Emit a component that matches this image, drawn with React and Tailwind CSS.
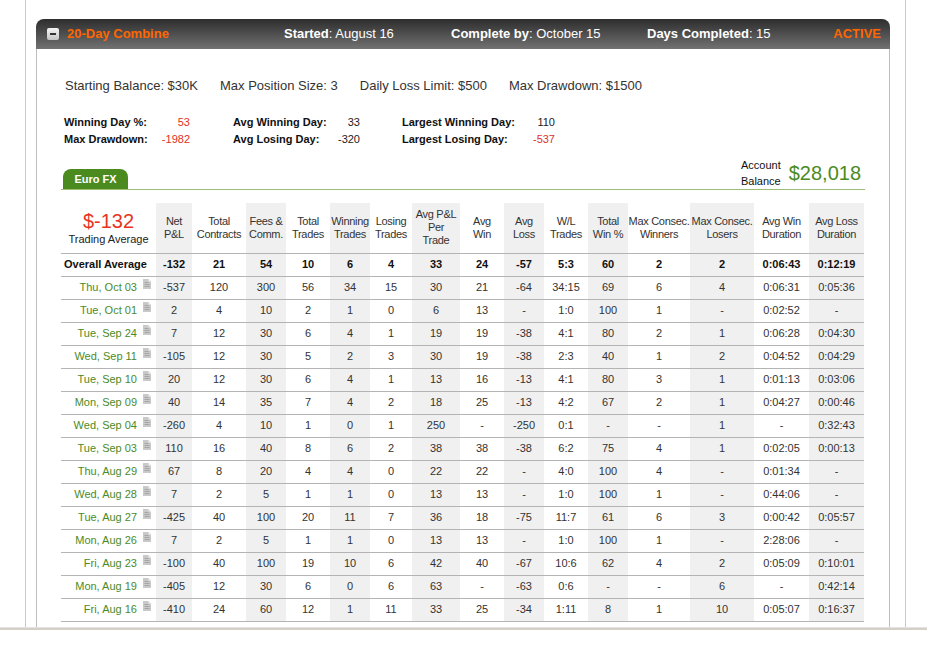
import React from "react";

const columns = [
  ["Net", "P&L"],
  ["Total", "Contracts"],
  ["Fees &", "Comm."],
  ["Total", "Trades"],
  ["Winning", "Trades"],
  ["Losing", "Trades"],
  ["Avg P&L", "Per", "Trade"],
  ["Avg", "Win"],
  ["Avg", "Loss"],
  ["W/L", "Trades"],
  ["Total", "Win %"],
  ["Max Consec.", "Winners"],
  ["Max Consec.", "Losers"],
  ["Avg Win", "Duration"],
  ["Avg Loss", "Duration"],
];

const widths = [95, 36, 54, 40, 44, 40, 42, 48, 44, 40, 44, 40, 62, 64, 55, 55];

const overall = ["-132", "21", "54", "10", "6", "4", "33", "24", "-57", "5:3", "60", "2", "2", "0:06:43", "0:12:19"];

const days = [
  ["Thu, Oct 03", "-537", "120", "300", "56", "34", "15", "30", "21", "-64", "34:15", "69", "6", "4", "0:06:31", "0:05:36"],
  ["Tue, Oct 01", "2", "4", "10", "2", "1", "0", "6", "13", "-", "1:0", "100", "1", "-", "0:02:52", "-"],
  ["Tue, Sep 24", "7", "12", "30", "6", "4", "1", "19", "19", "-38", "4:1", "80", "2", "1", "0:06:28", "0:04:30"],
  ["Wed, Sep 11", "-105", "12", "30", "5", "2", "3", "30", "19", "-38", "2:3", "40", "1", "2", "0:04:52", "0:04:29"],
  ["Tue, Sep 10", "20", "12", "30", "6", "4", "1", "13", "16", "-13", "4:1", "80", "3", "1", "0:01:13", "0:03:06"],
  ["Mon, Sep 09", "40", "14", "35", "7", "4", "2", "18", "25", "-13", "4:2", "67", "2", "1", "0:04:27", "0:00:46"],
  ["Wed, Sep 04", "-260", "4", "10", "1", "0", "1", "250", "-", "-250", "0:1", "-", "-", "1", "-", "0:32:43"],
  ["Tue, Sep 03", "110", "16", "40", "8", "6", "2", "38", "38", "-38", "6:2", "75", "4", "1", "0:02:05", "0:00:13"],
  ["Thu, Aug 29", "67", "8", "20", "4", "4", "0", "22", "22", "-", "4:0", "100", "4", "-", "0:01:34", "-"],
  ["Wed, Aug 28", "7", "2", "5", "1", "1", "0", "13", "13", "-", "1:0", "100", "1", "-", "0:44:06", "-"],
  ["Tue, Aug 27", "-425", "40", "100", "20", "11", "7", "36", "18", "-75", "11:7", "61", "6", "3", "0:00:42", "0:05:57"],
  ["Mon, Aug 26", "7", "2", "5", "1", "1", "0", "13", "13", "-", "1:0", "100", "1", "-", "2:28:06", "-"],
  ["Fri, Aug 23", "-100", "40", "100", "19", "10", "6", "42", "40", "-67", "10:6", "62", "4", "2", "0:05:09", "0:10:01"],
  ["Mon, Aug 19", "-405", "12", "30", "6", "0", "6", "63", "-", "-63", "0:6", "-", "-", "6", "-", "0:42:14"],
  ["Fri, Aug 16", "-410", "24", "60", "12", "1", "11", "33", "25", "-34", "1:11", "8", "1", "10", "0:05:07", "0:16:37"],
];

function NoteIcon() {
  return (
    <svg width="8" height="10" viewBox="0 0 8 10" className="inline-block align-[2px] ml-[6px]">
      <path d="M0 0h5.5L8 2.5V10H0z" fill="#c9c9c9" />
      <path d="M5.5 0v2.5H8z" fill="#efefef" />
      <path d="M1.5 3.5h4M1.5 5.5h5M1.5 7.5h5" stroke="#a5a5a5" strokeWidth="1" />
    </svg>
  );
}

function Stat({ label, value, red, width }) {
  return (
    <div className="flex justify-between" style={{ width }}>
      <span className="font-bold text-[#111]">{label}</span>
      <span className={red ? "text-[#e0301e]" : "text-[#222]"}>{value}</span>
    </div>
  );
}

export default function App() {
  const shade = (i) => (i % 2 === 1 ? "bg-[#f0f0f0]" : "");

  return (
    <div className="w-[927px] h-[656px] bg-white overflow-hidden font-['Liberation_Sans',Arial,sans-serif]">
      <div className="h-[628px] border-b border-[#e2e2e2]">
        <div className="ml-[25px] w-[881px] h-full border-x border-[#cacaca] pt-[19px] pl-[10px]">
          <div className="w-[854px] h-full flex flex-col">
            {/* header bar */}
            <div className="h-[30px] shrink-0 rounded-t-[8px] bg-gradient-to-b from-[#2e2e2e] to-[#727272] flex items-center text-[13px] text-white">
              <div className="w-[248px] flex items-center pl-[11px]">
                <div className="w-[12px] h-[12px] rounded-[2px] bg-gradient-to-b from-[#f6f6f6] to-[#c4c4c4] flex items-center justify-center">
                  <span className="block w-[6px] h-[2px] bg-[#333]" />
                </div>
                <span className="ml-[8px] font-bold text-[#ff6600]">20-Day Combine</span>
              </div>
              <div className="w-[167px]">
                <span className="font-bold">Started</span>: August 16
              </div>
              <div className="w-[196px]">
                <span className="font-bold">Complete by</span>: October 15
              </div>
              <div className="flex-1">
                <span className="font-bold">Days Completed</span>: 15
              </div>
              <div className="pr-[9px] font-bold text-[#ff6600]">ACTIVE</div>
            </div>

            {/* body */}
            <div className="flex-1 border-x border-[#bdbdbd] px-[24px] pt-[29px]">
              <div className="pl-[4px] flex gap-[22px] text-[13px] leading-[16px] text-[#333]">
                <span>Starting Balance: $30K</span>
                <span>Max Position Size: 3</span>
                <span>Daily Loss Limit: $500</span>
                <span>Max Drawdown: $1500</span>
              </div>

              <div className="mt-[20px] pl-[3px] flex text-[11px] leading-[17px]">
                <div>
                  <Stat label="Winning Day %:" value="53" red width={126} />
                  <Stat label="Max Drawdown:" value="-1982" red width={126} />
                </div>
                <div className="ml-[43px]">
                  <Stat label="Avg Winning Day:" value="33" width={127} />
                  <Stat label="Avg Losing Day:" value="-320" width={127} />
                </div>
                <div className="ml-[42px]">
                  <Stat label="Largest Winning Day:" value="110" width={153} />
                  <Stat label="Largest Losing Day:" value="-537" red width={153} />
                </div>
              </div>

              <div className="mt-[9px] flex items-end justify-between border-b border-[#9cbf73]">
                <div className="ml-[2px] w-[65px] h-[20px] rounded-t-[8px] bg-[#4a8a1e] text-white text-[11px] font-bold flex items-center justify-center">
                  Euro FX
                </div>
                <div className="flex items-center pr-[4px]">
                  <div className="text-[11px] leading-[16px] text-[#111]">
                    Account
                    <br />
                    Balance
                  </div>
                  <div className="ml-[8px] text-[20px] text-[#4b8b1f] leading-[24px]">$28,018</div>
                </div>
              </div>

              <table className="mt-[13px] table-fixed border-collapse w-[803px] text-[11px] text-[#333]">
                <colgroup>
                  {widths.map((w, i) => (
                    <col key={i} style={{ width: w }} />
                  ))}
                </colgroup>
                <thead>
                  <tr className="h-[50px] border-b border-[#b4b4b4]">
                    <th className="font-normal text-center align-middle">
                      <div className="text-[20px] leading-[22px] text-[#e8341c]">$-132</div>
                      <div className="leading-[14px] text-[#222]">Trading Average</div>
                    </th>
                    {columns.map((c, i) => (
                      <th
                        key={i}
                        className={`font-normal text-center align-middle leading-[13px] whitespace-nowrap p-0 tracking-[-0.3px] ${shade(i + 1)}`}
                      >
                        {c.map((line, j) => (
                          <div key={j}>{line}</div>
                        ))}
                      </th>
                    ))}
                  </tr>
                </thead>
                <tbody>
                  <tr className="h-[23px] border-b border-[#b4b4b4] font-bold text-[#111]">
                    <td className="text-left pl-[3px] whitespace-nowrap">Overall Average</td>
                    {overall.map((v, i) => (
                      <td key={i} className={`text-center ${shade(i + 1)}`}>
                        {v}
                      </td>
                    ))}
                  </tr>
                  {days.map((row) => (
                    <tr key={row[0]} className="h-[23px] border-b border-[#b4b4b4]">
                      <td className="text-right pr-[5px] whitespace-nowrap text-[#4b8b1f]">
                        {row[0]}
                        <NoteIcon />
                      </td>
                      {row.slice(1).map((v, i) => (
                        <td key={i} className={`text-center ${shade(i + 1)}`}>
                          {v}
                        </td>
                      ))}
                    </tr>
                  ))}
                </tbody>
              </table>
            </div>
          </div>
        </div>
      </div>
      <div className="h-[2px] bg-[#d4d0c8]" />
    </div>
  );
}
